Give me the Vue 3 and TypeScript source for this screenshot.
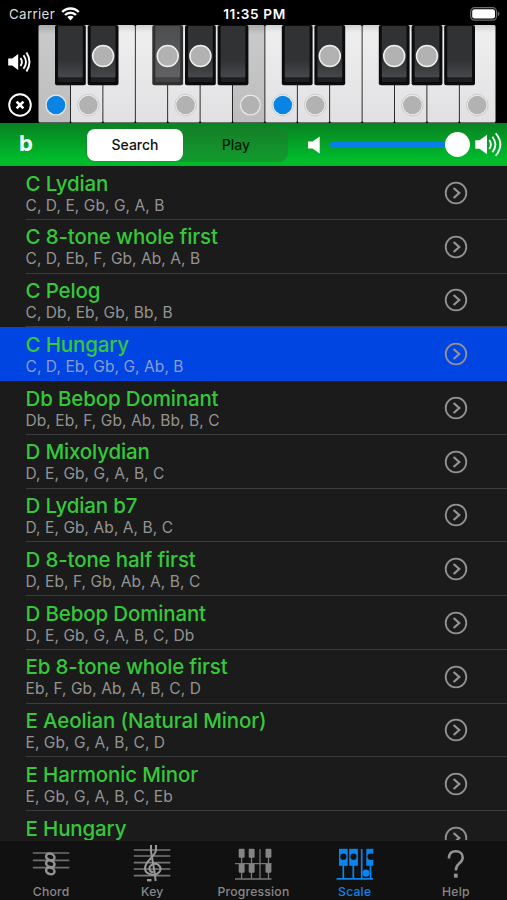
<script setup lang="ts">
interface Scale {
  name: string
  notes: string
  selected?: boolean
}

interface Key {
  x: number
  pressed?: boolean
  dot?: 'note' | 'root'
}

const scales: Scale[] = [
  { name: 'C Lydian', notes: 'C, D, E, Gb, G, A, B' },
  { name: 'C 8-tone whole first', notes: 'C, D, Eb, F, Gb, Ab, A, B' },
  { name: 'C Pelog', notes: 'C, Db, Eb, Gb, Bb, B' },
  { name: 'C Hungary', notes: 'C, D, Eb, Gb, G, Ab, B', selected: true },
  { name: 'Db Bebop Dominant', notes: 'Db, Eb, F, Gb, Ab, Bb, B, C' },
  { name: 'D Mixolydian', notes: 'D, E, Gb, G, A, B, C' },
  { name: 'D Lydian b7', notes: 'D, E, Gb, Ab, A, B, C' },
  { name: 'D 8-tone half first', notes: 'D, Eb, F, Gb, Ab, A, B, C' },
  { name: 'D Bebop Dominant', notes: 'D, E, Gb, G, A, B, C, Db' },
  { name: 'Eb 8-tone whole first', notes: 'Eb, F, Gb, Ab, A, B, C, D' },
  { name: 'E Aeolian (Natural Minor)', notes: 'E, Gb, G, A, B, C, D' },
  { name: 'E Harmonic Minor', notes: 'E, Gb, G, A, B, C, Eb' },
  { name: 'E Hungary', notes: '' },
]

const whiteKeys: Key[] = [
  { x: 0, pressed: true, dot: 'root' },
  { x: 32.4, dot: 'note' },
  { x: 64.8 },
  { x: 97.2 },
  { x: 129.6, dot: 'note' },
  { x: 162 },
  { x: 194.4, pressed: true, dot: 'note' },
  { x: 226.8, dot: 'root' },
  { x: 259.2, dot: 'note' },
  { x: 291.6 },
  { x: 324 },
  { x: 356.4, dot: 'note' },
  { x: 388.8 },
  { x: 421.2, dot: 'note' },
]

const blackKeys: Key[] = [
  { x: 17 },
  { x: 49.7, dot: 'note' },
  { x: 114.3, pressed: true, dot: 'note' },
  { x: 147, dot: 'note' },
  { x: 179.6 },
  { x: 243.8 },
  { x: 276.4, dot: 'note' },
  { x: 340.8, dot: 'note' },
  { x: 373.6, dot: 'note' },
  { x: 406.2 },
]
</script>

<template>
  <main class="screen">
    <header class="status">
      <div class="carrier">
        <span>Carrier</span>
        <svg width="19" height="14" viewBox="0 0 19 14" fill="none" stroke="#fff">
          <path d="M1.2 5a11.7 11.7 0 0 1 16.6 0M4 8a7.8 7.8 0 0 1 11 0" stroke-width="2.4" />
          <path d="M6.3 10.1a4.6 4.6 0 0 1 6.4 0L9.5 13.4z" fill="#fff" stroke="none" />
        </svg>
      </div>
      <span class="time">11:35 PM</span>
      <svg class="battery" width="30" height="14" viewBox="0 0 30 14">
        <rect x=".7" y=".7" width="25.8" height="12.4" rx="3.8" fill="none" stroke="#6e6e6e" stroke-width="1.2" />
        <rect x="2.2" y="2.2" width="22.8" height="9.4" rx="2.4" fill="#fff" />
        <path d="M27.8 4.7q1.7.6 1.7 2.2t-1.7 2.2z" fill="#6e6e6e" />
      </svg>
    </header>

    <section class="piano">
      <div class="piano-tools">
        <svg width="24" height="22" viewBox="0 0 24 22" fill="none" stroke="#fff" stroke-width="1.9">
          <path d="M.2 7.5h4l6-4.5v16l-6-4.5h-4z" fill="#fff" stroke="none" />
          <path d="M12.5 7q2.8 4 0 8M15.5 4.2q5 6.8 0 13.6M18.5 1.6q6 9.4 0 18.8" />
        </svg>
        <svg width="24" height="24" viewBox="0 0 24 24" fill="none" stroke="#fff">
          <circle cx="12" cy="12" r="10.8" stroke-width="1.9" />
          <path d="m8.6 8.6 6.8 6.8m0-6.8-6.8 6.8" stroke-width="2.7" />
        </svg>
      </div>
      <svg class="keys" width="458" height="98" viewBox="0 0 458 98">
        <defs>
          <linearGradient id="white" x1="0" y1="0" x2="0" y2="1">
            <stop offset="0" stop-color="#cfcfd1" />
            <stop offset=".08" stop-color="#eeeeef" />
            <stop offset="1" stop-color="#e1e1e3" />
          </linearGradient>
          <linearGradient id="white-pressed" x1="0" y1="0" x2="0" y2="1">
            <stop offset="0" stop-color="#aaa" />
            <stop offset=".1" stop-color="#c9c9c9" />
            <stop offset="1" stop-color="#bdbdbd" />
          </linearGradient>
          <linearGradient id="black" x1="0" y1="0" x2="0" y2="1">
            <stop offset="0" stop-color="#303234" />
            <stop offset=".65" stop-color="#303234" />
            <stop offset="1" stop-color="#47484b" />
          </linearGradient>
          <linearGradient id="black-pressed" x1="0" y1="0" x2="0" y2="1">
            <stop offset="0" stop-color="#4d4e4f" />
            <stop offset="1" stop-color="#616163" />
          </linearGradient>
        </defs>
        <g v-for="(key, i) in whiteKeys" :key="`w${i}`">
          <rect :x="key.x + 0.5" y="0" :width="i === 13 ? 35.8 : 31.6" height="97.5" rx="1.5"
            :fill="key.pressed ? 'url(#white-pressed)' : 'url(#white)'" />
          <g v-if="key.dot">
            <circle :cx="key.x + 18" cy="80" r="10.8" fill="#eee" stroke="#bcbcbc" stroke-width=".7" />
            <circle :cx="key.x + 18" cy="80" r="9.3" :fill="key.dot === 'root' ? '#0a84e4' : '#b2b2b2'" />
          </g>
        </g>
        <g v-for="(key, i) in blackKeys" :key="`b${i}`">
          <rect :x="key.x" y="0" width="30.8" height="60.3" rx="2" :fill="key.pressed ? '#303030' : '#0a0b0d'" />
          <rect :x="key.x + 3" y="1" width="24.8" height="51.5" rx="1"
            :fill="key.pressed ? 'url(#black-pressed)' : 'url(#black)'" />
          <rect :x="key.x + 3" y="53" width="24.8" height="4" rx="1" :fill="key.pressed ? '#434445' : '#1d1e21'" />
          <circle v-if="key.dot" :cx="key.x + 15.4" cy="31" r="10.5" fill="#b2b2b2" stroke="#f0f0f0" stroke-width="1.5" />
        </g>
      </svg>
    </section>

    <nav class="toolbar">
      <span class="flat">b</span>
      <div class="segments">
        <button class="segment active">Search</button>
        <button class="segment">Play</button>
      </div>
      <svg class="quiet" width="12" height="18" viewBox="0 0 12 18" fill="#fff">
        <path d="M0 5.5h4.5L11.7.5v17l-7.2-5H0z" />
      </svg>
      <div class="slider">
        <span class="track"></span>
        <span class="thumb"></span>
      </div>
      <svg class="loud" width="28" height="26" viewBox="0 0 28 26" fill="none" stroke="#fff" stroke-width="1.8">
        <path d="M.3 8.3h4.2l7.5-5.6v19.6l-7.5-5.6H.3z" fill="#fff" stroke="none" />
        <path d="M14.3 8q3.2 4.5 0 9M17.4 4.7q6 7.8 0 15.6M20.7 1.2q9.3 11.3 0 22.6" />
      </svg>
    </nav>

    <section class="list">
      <article v-for="scale in scales" :key="scale.name" class="row" :class="{ selected: scale.selected }">
        <div class="row-body">
          <div>
            <h2>{{ scale.name }}</h2>
            <p v-if="scale.notes">{{ scale.notes }}</p>
          </div>
          <svg width="24" height="24" viewBox="0 0 24 24" fill="none" stroke="#929292">
            <circle cx="12" cy="12" r="10.3" stroke-width="1.8" />
            <path d="m9.6 7 5.6 5-5.6 5" stroke-width="2.3" />
          </svg>
        </div>
      </article>
    </section>

    <footer class="tabs">
      <div class="tab">
        <svg width="38" height="40" viewBox="0 0 38 40" fill="none" stroke="#6f6f6f" stroke-width="1.7">
          <path d="M.8 9h36.5M.8 16.3h36.5M.8 23.7h36.5" />
          <g stroke="#929292" stroke-width="2.5">
            <ellipse cx="18.3" cy="12.9" rx="4.3" ry="3.2" transform="rotate(20 18.3 12.9)" />
            <ellipse cx="18.3" cy="19.8" rx="4.3" ry="3.2" transform="rotate(20 18.3 19.8)" />
            <ellipse cx="18.3" cy="26.9" rx="4.3" ry="3.2" transform="rotate(20 18.3 26.9)" />
          </g>
        </svg>
        <span>Chord</span>
      </div>
      <div class="tab">
        <svg width="38" height="40" viewBox="0 0 38 40" fill="none" stroke="#777" stroke-width="1.6">
          <path d="M.8 6h36.5M.8 12h36.5M.8 18.6h36.5M.8 25h36.5M.8 31.6h36.5" />
          <g stroke="#999" stroke-width="2">
            <path d="M18 1v5.5c0 3 .6 4 1.2 6.5M23 1v5c-.7 7-11 10.5-11 18.2 0 6.3 9.8 8.6 14.2 4 3.7-4.5-1.7-10.8-7.7-7.2-3.8 2.5-2 7.5 2 7" />
            <path d="m19 13 3 18 .6 6" />
            <path d="M14 36.2h4.5" stroke-width="2.4" />
          </g>
        </svg>
        <span>Key</span>
      </div>
      <div class="tab">
        <svg width="38" height="40" viewBox="0 0 38 40" fill="#858585" stroke="#777" stroke-width="1.3">
          <path d="M1 19.7h36.5M1 35h36.5M7.6 5v30M17.5 5v30M26 5v30M34.5 5v30" fill="none" />
          <g stroke="none">
            <rect x="4.7" y="4.8" width="5.9" height="9" rx="1" />
            <rect x="14.7" y="4.8" width="5.9" height="9" rx="1" />
            <rect x="31.5" y="4.8" width="5.9" height="9" rx="1" />
            <rect x="4.7" y="19.8" width="5.9" height="9" rx="1" />
            <rect x="14.7" y="19.8" width="5.9" height="9" rx="1" />
            <rect x="31.5" y="19.8" width="5.9" height="9" rx="1" />
          </g>
        </svg>
        <span>Progression</span>
      </div>
      <div class="tab current">
        <svg width="38" height="40" viewBox="0 0 38 40" fill="#0b84ee" stroke="#0b84ee" stroke-width="1.7">
          <path d="M.5 34.8h36.5M7.3 15v20M17.3 15v20M25.7 5v30M34.5 15v20" fill="none" />
          <g stroke="none">
            <rect x="3" y="4.8" width="8.7" height="17" />
            <rect x="13.2" y="4.8" width="8.7" height="17" />
            <rect x="30.3" y="4.8" width="7" height="17" />
            <circle cx="30" cy="29.1" r="3.6" />
          </g>
          <g fill="#111" stroke="none">
            <circle cx="7.3" cy="12.7" r="3.1" />
            <circle cx="17.5" cy="12.7" r="3.1" />
            <circle cx="34.6" cy="12.7" r="3.1" />
            <path d="M34.6 9.7H38v6h-3.4z" />
          </g>
        </svg>
        <span>Scale</span>
      </div>
      <div class="tab">
        <svg width="38" height="40" viewBox="0 0 38 40" fill="none" stroke="#929292" stroke-width="2.6">
          <path d="M11.9 14.5c.1-4.5 2.6-7.2 6.9-7.2 4.2 0 6.9 2.4 6.9 6.1 0 3-1.5 4.4-3.6 6.1-2.2 1.8-3.2 3.1-3.2 7" />
          <path d="M18.8 29.6v4.1" stroke-width="3.7" />
        </svg>
        <span>Help</span>
      </div>
    </footer>
  </main>
</template>

<style>
body {
  margin: 0;
  background: #000;
}
</style>

<style scoped>
.screen {
  width: 507px;
  height: 900px;
  overflow: hidden;
  display: flex;
  flex-direction: column;
  background: #000;
  color: #fff;
  font-family: Inter, "Liberation Sans", sans-serif;
}

svg {
  display: block;
  flex-shrink: 0;
}

.status {
  height: 25px;
  flex-shrink: 0;
  display: grid;
  grid-template-columns: 1fr auto 1fr;
  align-items: center;
  padding: 2px 7px 0 9px;
  box-sizing: border-box;
  font-size: 13.3px;
  letter-spacing: .35px;
}

.carrier {
  display: flex;
  align-items: center;
  gap: 6px;
  color: #ddd;
}

.time {
  font-size: 13.6px;
  font-weight: 600;
  letter-spacing: .6px;
}

.battery {
  justify-self: end;
}

.piano {
  height: 98px;
  flex-shrink: 0;
  display: flex;
}

.piano-tools {
  width: 38px;
  display: flex;
  flex-direction: column;
  align-items: center;
  gap: 20px;
  padding: 26px 0 0 1px;
  box-sizing: border-box;
}

.toolbar {
  height: 43px;
  flex-shrink: 0;
  display: flex;
  align-items: center;
  padding-left: 19px;
  box-sizing: border-box;
  background: linear-gradient(#078221, #00bd2c 88%, #00b827);
}

.flat {
  width: 67px;
  padding-bottom: 3px;
  font-size: 22px;
  line-height: 24px;
  font-weight: 700;
}

.segments {
  width: 202px;
  height: 34px;
  display: flex;
  gap: 5px;
  padding: 1px 4px 1px 1px;
  box-sizing: border-box;
  border-radius: 9px;
  background: rgba(35, 120, 45, .5);
}

.segment {
  flex: 1;
  padding: 0;
  border: 0;
  border-radius: 8px;
  background: none;
  color: #07180a;
  font: 500 14px Inter, "Liberation Sans", sans-serif;
}

.active {
  background: #fff;
  color: #111;
}

.quiet {
  margin-left: 20px;
}

.slider {
  width: 140px;
  height: 26px;
  margin: 0 5px 0 10px;
  display: flex;
  align-items: center;
}

.track {
  flex: 1;
  height: 5px;
  border-radius: 3px 0 0 3px;
  background: #087eea;
}

.thumb {
  width: 25px;
  height: 25px;
  border-radius: 50%;
  background: #fff;
}

.list {
  flex: 1;
  min-height: 0;
  overflow: hidden;
  background: #1b1b1b;
}

.row {
  height: 53.77px;
  padding-left: 25.5px;
}

.row-body {
  height: 100%;
  display: flex;
  justify-content: space-between;
  padding: 5.5px 39px 0 0;
  box-sizing: border-box;
  border-bottom: 1px solid #3d3d3f;
}

.row-body svg {
  margin-top: 9.3px;
}

h2,
p {
  margin: 0;
  white-space: nowrap;
}

h2 {
  color: #35c83a;
  font-size: 20.5px;
  line-height: 24px;
  font-weight: 550;
  letter-spacing: -.15px;
}

p {
  color: #949494;
  font-size: 15.5px;
  line-height: 19.4px;
  letter-spacing: .07px;
}

.selected {
  background: #0044e2;
}

.selected .row-body {
  border-color: #0044e2;
}

.selected p {
  color: #8c9dcc;
}

.tabs {
  height: 60px;
  flex-shrink: 0;
  display: grid;
  grid-template-columns: repeat(5, 101.2px);
  background: #111;
  border-top: 1px solid #1f1f1f;
  box-sizing: border-box;
}

.tab {
  display: flex;
  flex-direction: column;
  align-items: center;
  padding: 3px 0 0 1px;
  color: #888;
  font-size: 12.2px;
  line-height: 15px;
  font-weight: 550;
  letter-spacing: .2px;
}

.current {
  color: #0b84ee;
}
</style>
